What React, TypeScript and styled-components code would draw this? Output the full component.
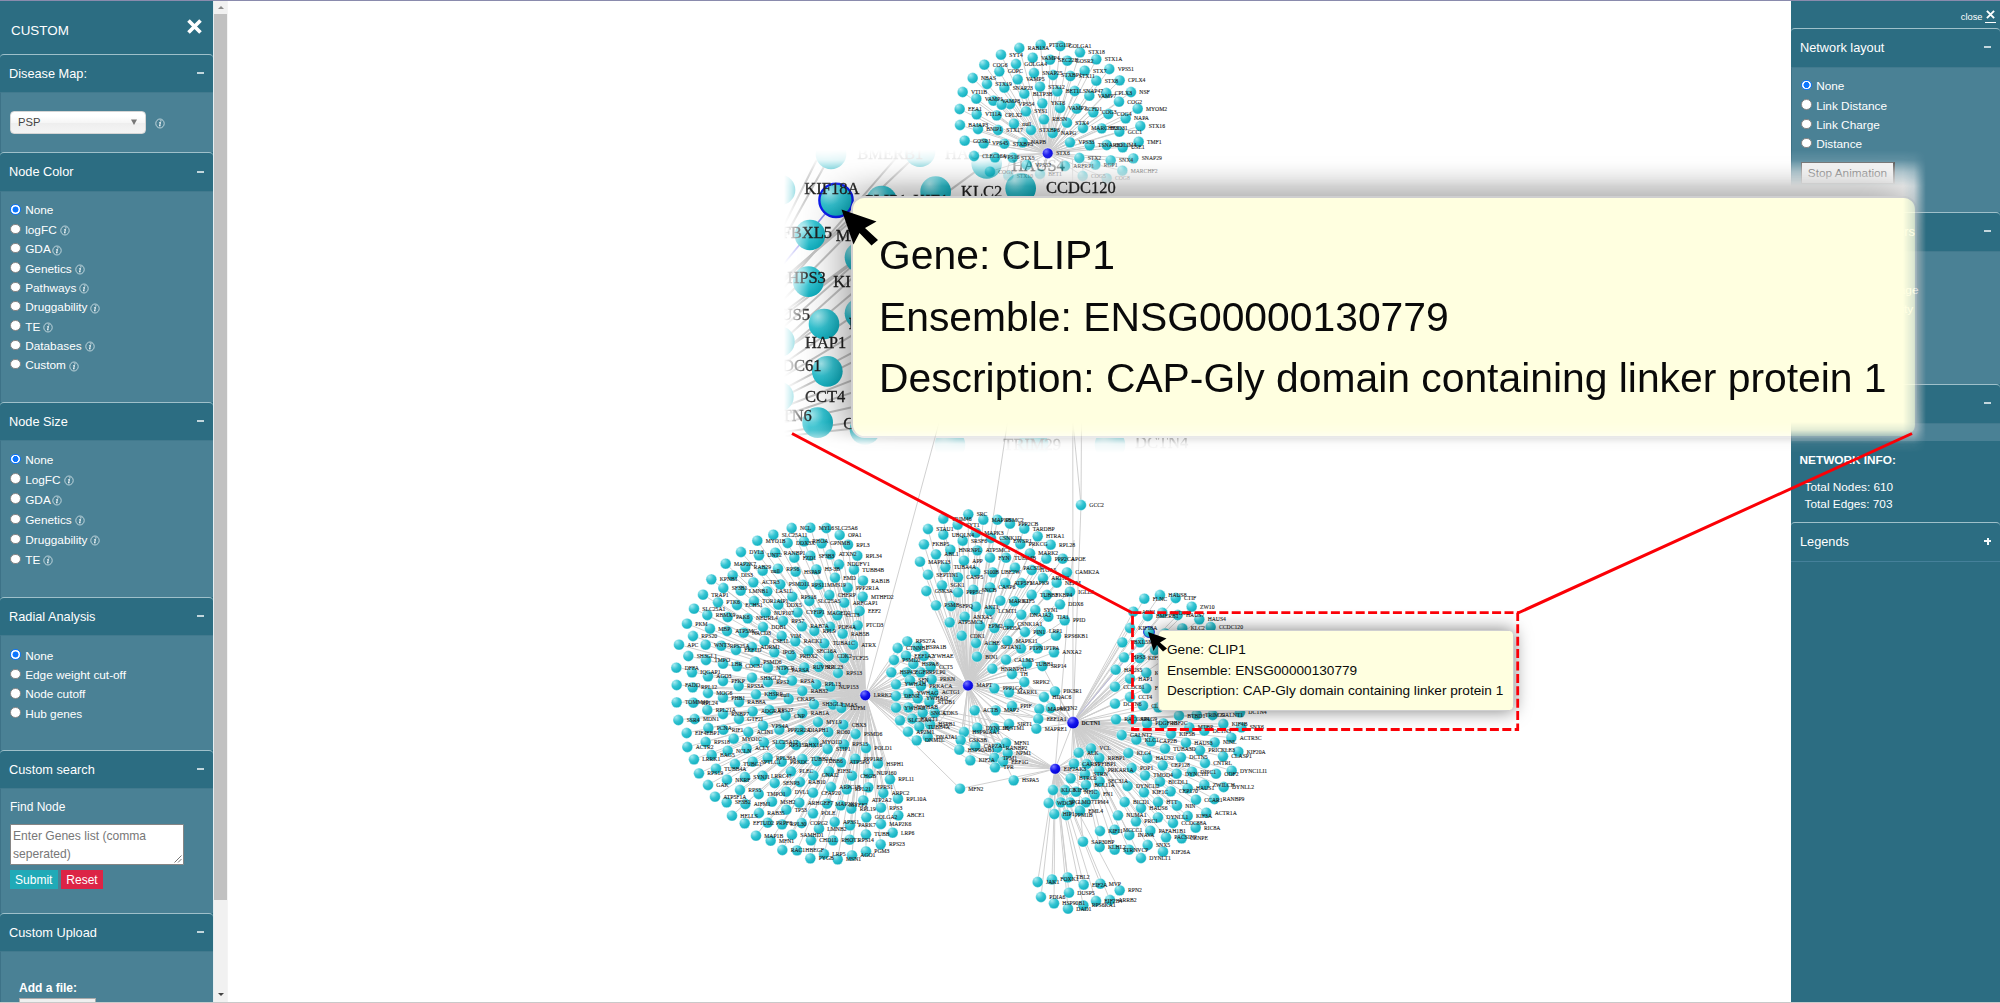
import React from "react";
import styled, { createGlobalStyle, css } from "styled-components";

const GlobalStyle = createGlobalStyle`
  html, body { margin: 0; padding: 0; background: #fff; overflow: hidden; }
  * { box-sizing: border-box; }
  body { font-family: "Liberation Sans", Arial, sans-serif; }
`;

const colors = {
  dark: "#2c6d82",
  body: "#4a8195",
  rule: "#9fc0ca",
  edge: "#3d7287",
};

/* ---------- graph data ---------- */

type GraphNode = { x: number; y: number; label: string };

// Positions are stored in thirds of a pixel, relative to the cluster origin.
const parse = (ox: number, oy: number, src: string): GraphNode[] =>
  src
    .split(";")
    .map((s) => s.trim())
    .filter(Boolean)
    .map((s) => {
      const [x, y, label = ""] = s.split(/\s+/);
      return { x: ox + Number(x) / 3, y: oy + Number(y) / 3, label };
    });

const HUBS = {
  STX6: { x: 1047.7, y: 153.3, label: "STX6" },
  LRRK2: { x: 865.3, y: 695.3, label: "LRRK2" },
  MAPT: { x: 968, y: 685.5, label: "MAPT" },
  DCTN1: { x: 1073, y: 722.7, label: "DCTN1" },
  EIF2AK3: { x: 1055.2, y: 768.8, label: "EIF2AK3" },
};

const stx6 = parse(940, 30, `238 54 RAB13A;302 44 PTTG1IP;361 48 GOLGA1;420 67 STX18;183 74 SYT4;278 83 VAMP4;330 89 SEC22B;382 92 GOSR2;
469 88 STX1A;133 104 COG6;228 102 GOLGA4;178 124 GOPC;282 129 SNAP25;339 135 STXBP1;391 138 STX11;434 122 STX7;508 117 VPS51;98 144 NBAS;
233 148 VAMP5;141 162 STX19;193 173 SNAP23;300 170 STX12;469 152 STX8;539 151 CPLX4;68 186 VTI1B;253 191 BLTP3B;352 184 BET1L;404 183 SNAP47;
448 197 VAMP7;499 189 CPLX3;573 186 NSF;109 206 VAMP1;160 212 VAMP8;210 222 VPS54;185 224;537 215 COG2;307 220 YKT6;360 234 VAMP2;59 237 EEA1;593 236 MYOM2;
110 253 VTI1A;170 256 CPLX2;258 244 SYS1;410 236 SCFD1;460 247 COG3;505 252 COG4;557 265 NAPA;312 268 RBSN;381 278 STX4;222 281 null;
60 285 BAIAP3;114 297 BNIP1;174 300 STX17;273 300 STXBP6;338 309 NAPG;429 294 MARCHF3;485 295 BUD31;538 305 GCC1;601 288 STX16;74 332 GOSR1;
131 340 VPS45;193 341 STXBP5;248 337 NAPB;390 337 VPS33;449 346 TSNARE1;500 345 GOLIM4;548 352 USE1;596 335 TMF1;102 378 CLEC16A;165 382 VPS16;
218 383 STX5;418 384 STX2;512 391 SNX4;580 385 SNAP29;375 408 ARFRP1;466 404 RGP1;547 422 MARCHF2;150 425 COG1;300 432 BET1;428 438 COG5;260 405 VPS52;205 437 STX10;500 445 COG8`);

const lrrk2 = parse(660, 500, `395 84 NCL;451 83 MYL6;499 84 SLC25A6;340 104 SLC25A11;539 105 OPA1;292 122 MYO1B;383 129 DDX3X;432 124 RHOA;485 130 GPNMB;564 134 RPL3;
243 156 DVL3;297 166 UNT2;346 158 RANBP1;403 173 FZD1;451 167 SF3B3;511 163 ATXN2;592 167 RPL34;197 191 MAP2K7;256 201 RAB29;308 212 null;354 206 RPS6;
407 215 HSPA9;469 208 H3-3B;537 193 NDUFV1;582 209 TUBB4B;154 238 KPNB1;218 226 DIS3;280 247 ACTR3;361 253 PSMD11;429 254 RPS11;476 254 MMS19;525 233 EMD;
563 263 PPP2R1A;609 242 RAB1B;129 284 TRAP1;190 264 SF3B1;242 272 LMNB1;322 274 LAS1L;397 290 RPS16;508 285 CHERP;608 290 MTHFD2;174 307 PTK6;231 315 ECHS1;
282 303 TOR1AIP1;355 314 DDX5;448 303 SLC25A5;553 308 ARFGAP1;102 326 SLC25A1;142 345 RBMX9;203 351 PAK6;263 355 NEURL4;317 338 NUP107;413 337 CYFIP1;476 338 MAGED2;
532 346 CCT3;599 333 EEF2;81 371 PKM;150 386 MBP;201 393 ATP5MG;251 398 NACD3;309 381 DDB1;369 363 RPS7;426 379 RAB7A;463 393 RPL9;510 380 PDE4A;593 376 PTCD3;
99 408 RPS20;313 423 CSE1L;365 408 VIM;548 401 RAB5B;57 434 APC;137 434 WNT3;184 437 RPS25A;228 450 EEF1D;276 441 ADRM1;406 424 RACK1;493 430 TUBA1C;579 434 ATRX;
85 468 SH3GL1;138 480 TMPO;343 457 IPO5;394 467 PRDX2;445 453 SEC16A;506 468 CDK2;552 474 TCF25;189 491 LBR;231 499 CDC37;285 485 PSMD6;324 503 NTPCR;370 510 PARSA;
433 502 RUVBL1;476 501 RPL23;49 503 DFFA;96 517 IQGAP1;144 529 AGO3;534 519 RPS13;189 543 PFKP;276 533 SH3GL2;324 546 RPS2;396 542 RPSA;469 553 RPL13;511 560 NUP153;
50 555 FADD;98 562 RPL12;236 558 RPS3A;144 579 MOG6;288 583 KHSRP;337 584 null;386 597 CKAP5;427 573 RAB32;50 607 TOMM40;100 608 RPL24;189 593 PHB1;237 606 RAB8A;
462 613 SH3GL3;519 614 CMAS;544 624 TUFM;142 630 RPL21A;189 642 RNBP7;278 634 ADGRA3;328 630 RPS27;377 647 CNP;427 640 RAB1A;55 660 SSR4;104 657 MDN1;
237 657 GTF2I;474 666 MYL9;550 674 CBX3;145 684 PCNA;190 689 RIF1;265 696 ACIN1;309 677 VPS4A;358 689 PPP2R2A;420 690 DIAPH1;505 696 RO60;587 702 PSMD6;
80 699 EIF4EBP1;221 716 MYO1C;137 726 RPS18;82 741 ACTR2;312 727 SLC25A12;361 734 RPS15A;408 735 DHX16;461 727 MYO1D;552 733 RPS15;618 744 POLD1;
155 765 BAG5;203 752 NCLN;260 745 ACLY;503 747 STIP1;102 778 LRRK1;323 773 RPL36A;365 785 PRKDC;427 777 TUBB2A;470 783 TUBB6;543 787 ATP5PO;586 776 PPP1R8;
654 791 HSPH1;117 820 RPS19;168 806 TUBB4A;225 792 TUBG1;278 785 SPTLC1;393 814 PLEC;460 826 GNAI2;507 814 EIF3L;576 827 CHGB;625 820 NUP160;690 838 RPL11;
144 855 GAK;201 839 NKRF;255 831 SYNJ1;308 827 LRRC47;344 849 SENP3;420 846 RAB10;513 861 ARPC1B;560 868 RPL21;625 862 EPRS1;670 879 ARPC2;714 896 RPL10A;
165 890 ATP5F1A;240 870 RPS5;296 882 TMPO1;379 875 DVL1;459 878 CFAP20;200 907 SF3B2;256 912 AIFM1;336 905 MSH2;418 908 ARHGEF7;501 911 MAP2K1;542 916 MYEF2;610 901 ATP2A2;
663 923 RPS3;216 947 HELLS;297 939 RAB35;379 929 TP53;459 940 POLE;574 926 RPL19;619 952 GOLGA2;715 946 ABCE1;254 970 EFTUD2;323 968 PRPF6;366 973 RPL30;
425 969 COPG2;524 966 AP3S1;570 976 PARK7;663 972 MAP2K6;288 1007 MAP1B;332 1022 MFN1;396 1004 SAMHD1;477 986 LMNB2;618 1003 TUBB;698 998 LRP6;453 1021 CHD1L;
519 1021 RHOT1;569 1019 RPS14;662 1033 RPS23;367 1050 RAC1;411 1051 HBEGF;618 1054 PGM3;451 1075 PYGB;492 1062 LRP5;533 1078 MSN1;576 1066 AGO1`);

const shared = parse(880, 490, `82 454 RPS27A;53 474 CTNNB1;112 470 HSPA1B;42 510 PSMD2;78 497 EEF1A2;132 498 YWHAE;34 547 HSP45;100 522 HSPA8;80 547 EGFR;122 547 RPLP0;152 530 CCT5;
90 571 SFN;155 568 PRKN;48 583 YWHAH;123 588 PRKACA;48 618 DENR;85 610 YWHAG;113 625 YWHAQ;160 607 ACTG1;148 635 STUB1;48 653 YWHAZ;85 652 YWHAB;128 668 SNCA;
164 668 CDK5;60 691 SLC25A4;97 686 FXCT1;118 710 TUBB4A;150 703 HSPB1;84 725 AP2M1;143 740 DNAJA1;110 751 DNM1L`);

const mapt = parse(880, 490, `265 73 SRC;190 86 TRIM46;310 89 MAPK8;352 89 PSMC2;233 104 SYT1;390 101 PPP2CB;433 116 TARDBP;144 117 STAU1;190 134 UBQLN4;288 128 MAPK3;
473 139 HTRA1;132 163 FKBP5;248 152 SRSF6;333 144 CSNK1D;375 153 EWSR1;421 162 PRKCG;512 164 RPL28;211 179 HNRNPL;292 181 ATP5MC1;168 193 ABL1;120 215 MAPK13;
252 212 APP;330 203 FYN;378 203 TUBB4B;450 190 MARK2;499 206 PPP2CA;548 206 APOE;196 232 TUBA4A;286 245 S100B;338 247 UBE2W;405 233 PACSIN;455 240 ITGA5;
561 247 CAMK2A;144 254 SEPTIN1;234 262 CASP5;489 264 ARTH2;186 286 SGK1;376 279 ATP5F1;330 292 CASP6;424 279 MAPK9;530 278 NEFM;139 303 GSK3A;234 307 PPP5C;
280 299 SNCB;570 305 IGLL5;455 314 TUBB3;501 315 FKBP4;168 346 PSMB;213 348 SFPQ;288 350 AKT1;361 332 MARK1;403 334 KIF5;540 343 DDX6;330 362 LCMT1;254 380 ANXA5;
424 374 DNAJA2;466 360 SYN1;209 397 ATP5MC3;300 408 EPM2;343 414 GPD5A;387 402 CSNK1A1;505 380 TIA1;554 391 PPID;245 437 CDK1;435 426 PIN1;482 423 LRP1;
528 437 RPS6KB1;288 459 ACHE;338 471 SPTAN1;382 452 MAPK11;423 475 PTPN1;473 475 PTPA;522 487 ANXA2;291 500 BIN1;378 509 CALM3;337 536 HNRNPH1;441 521 TUBB1;
487 528 SRP14;396 552 TH;433 576 SRPK2;343 595 PPP1CA;387 607 MARK1;525 604 PIK3R1;492 621 HDAC6;284 661 ACTB;347 661 MAP2;396 648 PPIF;478 657 MAPRE2;
512 654 ACTN2;475 687 EEF1A1;469 716 MAPRE1;387 702 SIRT1;292 713 DYNC1H;343 714 SQSTM1;252 726 HSP90AA1;242 751 GSK3B;378 759 MFN1;286 768 CAPZA1;352 773 RANBP2;
238 779 HSP90AB1;383 789 NPM1;271 811 KIF2A;343 803 TPM1;369 815 EEF1G;345 832 TPR`);

const loose = parse(880, 490, `603 45 GCC2;401 871 HSPA5;240 896 MFN2`);

const dctn1 = parse(1020, 570, `373 86 FLNC;420 75 HAUS8;467 84 CTIF;515 110 ZW10;340 125 ARF1;383 138 BMERB1;427 128 NUDCD;473 135 HAUS7;538 148 HAUS4;330 174 KIF18A;
435 190 CLIP1;487 175 KLC2;572 171 CCDC120;307 217 FBXL5;360 217 MAP4;312 262 HPS3;359 264 KIF5;287 299 HAUS5;330 326 HAP1;379 308 KIF3;405 240;285 350 CCDC61;379 355 FEZ1;
330 381 CCT4;285 401 DCTN6;369 407 CLASP;415 412;288 448 RACGAP1;336 448 SPAG9;381 460 PDGFRB;430 460 KIF2C;477 437 BTBD1;530 434 TRIM29;578 435 GALNT1;660 427 DCTN4;
610 462 KIF4B;508 472 MTBP;553 482 DCTN3;664 472 SNX6;305 495 GALNT2;349 509 KLC1;393 514 CAP2B;453 492 KIF5B;634 503 ACTR3C;498 518 HAUS3;584 517 NINL;
435 536 TUBA3D;325 549 KLC4;540 541 PRICKLE3;655 545 KIF20A;609 559 CLASP1;382 564 HAUS2;483 562 DCTN5;555 579 CNTRL;428 586 CEP128;335 594 POP1;375 616 TMOD4;
470 611 DYNC1I1;516 605 DISC1;588 611 ODF2;635 602 DYNC1LI1;323 648 DYNC1I2;420 635 BICDL1;372 667 KIF1C;452 664 CEP170;503 655 HAUS1;553 644 ZWILCH;611 651 DYNLL2;
528 689 CCAR1;583 687 RANBP9;314 696 BICD1;414 696 HTT;363 714 HAUS6;471 707 NIN;559 728 ACTR1A;294 736 NUMA1;414 742 DYNLL1;503 738 KIF3A;348 754 PRC1;
459 759 CCDC88A;527 773 RIC8A;240 783 KIF11;284 779 MCCC1;328 795 INAVA;391 782 PAFAH1B1;438 802 PACSIN2;485 805 CENPE;189 815 SAP30BP;239 831 KLHL2;284 839 STRN;327 839 VCP;
383 825 SNX5;429 845 KIF26A;363 864 DYNLT1`);

const eif = parse(1020, 570, `213 535 VCL;176 548 ALK;238 564 RRBP1;162 581 CARS1;200 582 PPFIBP1;238 601 PRKAR1A;152 625 BTRC6;195 612 STRN;239 634 SEC31A;198 645 BCL11A;
99 660 KLC8;135 660 KIF15;168 665 NFIC;224 673 FN1;86 699 WDCP;122 697 SPG;150 697 LMO7;197 697 TPM4;103 732 HIP1;139 735 PPM1B;180 722 EML4;
53 936 JAK1;96 928 FOXK1;143 922 TBL2;191 944 EIF2A;241 941 MVP;299 961 RPN2;63 981 PDIA6;147 968 DUSP5;102 1000 HSP90B1;144 1016 DAD1;190 1006 RPS6KA1;228 993 EIF2B4;270 990 ARRB2`);

type Edge = [{ x: number; y: number }, { x: number; y: number }];
const fan = (hub: { x: number; y: number }, nodes: GraphNode[]): Edge[] => nodes.map((n) => [hub, n]);

const edges: Edge[] = [
  ...fan(HUBS.STX6, stx6),
  ...fan(HUBS.LRRK2, lrrk2),
  ...fan(HUBS.LRRK2, shared),
  ...fan(HUBS.MAPT, shared),
  ...fan(HUBS.MAPT, mapt),
  ...fan(HUBS.DCTN1, dctn1),
  ...fan(HUBS.DCTN1, mapt.slice(-28, -14)),
  ...fan(HUBS.EIF2AK3, eif),
  ...fan(HUBS.EIF2AK3, mapt.slice(-13)),
  ...fan(HUBS.LRRK2, mapt.slice(-14)),
  ...fan(HUBS.DCTN1, eif.slice(0, 8)),
  [HUBS.LRRK2, { x: 1010, y: 160 }],
  [HUBS.MAPT, HUBS.STX6],
  [HUBS.DCTN1, { x: 1072.6, y: 160 }],
  [HUBS.DCTN1, loose[0]],
  [loose[0], { x: 1083, y: 160 }],
  [loose[0], { x: 1060, y: 290 }],
  [HUBS.EIF2AK3, { x: 1074, y: 540 }],
  [HUBS.EIF2AK3, HUBS.DCTN1],
  [HUBS.EIF2AK3, loose[1]],
  [HUBS.MAPT, loose[1]],
  [HUBS.EIF2AK3, loose[2]],
  [HUBS.LRRK2, loose[2]],
];

const allNodes = [...stx6, ...lrrk2, ...shared, ...mapt, ...loose, ...dctn1, ...eif];

/* ---------- styled parts ---------- */

const Page = styled.div`
  position: relative;
  display: flex;
  width: 2000px;
  height: 1003px;
  overflow: hidden;
  background: #fff;
  border-top: 1px solid #8a8bad;
  border-bottom: 1px solid #c9c9c9;
`;

const Panel = styled.aside<{ $width: number }>`
  width: ${(p) => p.$width}px;
  flex: none;
  display: flex;
  flex-direction: column;
  overflow: hidden;
  background: ${colors.dark};
  color: #fff;
`;

const LeftHeader = styled.header`
  height: 52.8px;
  flex: none;
  display: flex;
  align-items: center;
  justify-content: space-between;
  padding: 6px 11px 0 11px;
  font-size: 13.4px;
  svg { margin-top: -8px; }
`;

const CloseBar = styled.header`
  height: 27px;
  flex: none;
  display: flex;
  justify-content: flex-end;
  align-items: flex-start;
  gap: 2.5px;
  padding: 7.5px 4px 0 0;
  font-size: 9.3px;
  line-height: 16px;
`;

const CloseMark = styled.span`
  display: flex;
  justify-content: center;
  width: 11px;
  height: 14px;
  padding-top: 1px;
  border-bottom: 1.5px solid #fff;
`;

const Section = styled.section<{ $height?: number }>`
  flex: none;
  height: ${(p) => (p.$height ? `${p.$height}px` : "auto")};
  display: flex;
  flex-direction: column;
`;

const SectionHead = styled.h3`
  display: flex;
  align-items: center;
  justify-content: space-between;
  flex: none;
  height: 38.5px;
  margin: 0;
  padding: 0 9px 0.8px 9px;
  border-top: 1.4px solid ${colors.rule};
  border-radius: 4px 4px 0 0;
  background: ${colors.dark};
  font-size: 12.75px;
  font-weight: 400;
`;

const Sign = styled.i<{ $plus?: boolean }>`
  display: grid;
  place-items: center;
  width: 7px;
  height: 7px;
  &::before {
    content: "";
    grid-area: 1 / 1;
    width: 7px;
    height: 2px;
    background: ${(p) => (p.$plus ? "#f6fafb" : "#c3d7dd")};
  }
  ${(p) =>
    p.$plus &&
    css`
      &::after {
        content: "";
        grid-area: 1 / 1;
        width: 2px;
        height: 7px;
        background: #f6fafb;
      }
    `}
`;

const SectionBody = styled.div<{ $pad: string }>`
  flex: 1;
  min-height: 0;
  padding: ${(p) => p.$pad};
  background: ${colors.body};
  border-left: 1px solid ${colors.edge};
  border-top: 1px solid #427a8e;
`;

const RadioRow = styled.label<{ $h: number }>`
  display: flex;
  align-items: center;
  height: ${(p) => p.$h}px;
  font-size: 11.8px;
  white-space: nowrap;
`;

const Dot = styled.span<{ $on?: boolean }>`
  width: 10.5px;
  height: 10.5px;
  margin: -2px 4.7px 0 0;
  border-radius: 50%;
  flex: none;
  background: ${(p) => (p.$on ? "radial-gradient(circle, #0d76ff 0 2.7px, #fff 3.3px)" : "#fff")};
  border: 1px solid ${(p) => (p.$on ? "#0d76ff" : "#858585")};
`;

const InfoSvg = styled.svg<{ $gap: number }>`
  margin: 2px 0 0 ${(p) => p.$gap}px;
`;

const SelectRow = styled.div`
  display: flex;
  align-items: center;
`;

const SelectBox = styled.div`
  display: flex;
  align-items: center;
  justify-content: space-between;
  width: 136px;
  height: 23px;
  padding: 0 8px 1px 7px;
  border: 1px solid #d5d5d5;
  border-radius: 4px;
  background: linear-gradient(#fff 20%, #f6f6f6 50%, #eee 52%, #f4f4f4);
  color: #444;
  font-size: 11.2px;
`;

const Field = styled.div`
  font-size: 12px;
  line-height: 15px;
`;

const TextArea = styled.div`
  display: flex;
  align-items: flex-end;
  justify-content: space-between;
  width: 174px;
  height: 41px;
  margin-top: 9.5px;
  padding: 2px 1px 1px 2px;
  border: 1px solid #858585;
  border-radius: 1px;
  background: #fff;
  color: #777;
  font-size: 12.1px;
  line-height: 18px;
  span { align-self: flex-start; width: 150px; }
  svg { flex: none; }
`;

const ButtonRow = styled.div`
  display: flex;
  gap: 3.5px;
  margin-top: 5px;
`;

const Button = styled.button<{ $bg: string; $w: number }>`
  width: ${(p) => p.$w}px;
  height: 19px;
  padding: 0;
  border: 0;
  background: ${(p) => p.$bg};
  color: #fff;
  font: 12px "Liberation Sans", Arial, sans-serif;
`;

const StopButton = styled.button`
  display: block;
  width: 94px;
  height: 22px;
  margin-top: 8.5px;
  padding: 0;
  border: 1px solid #555;
  border-right: 2px solid #333;
  background: #efefef;
  color: #111;
  font: 11.8px "Liberation Sans", Arial, sans-serif;
`;

const FileLabel = styled.div`
  font-size: 12px;
  font-weight: 700;
  line-height: 14px;
`;

const FileButton = styled.div`
  width: 77px;
  height: 20px;
  margin-top: 3px;
  border: 1px solid #aaa;
  background: #efefef;
`;

const NetworkInfo = styled.div`
  flex: none;
  height: 81px;
  padding: 11px 8.6px 0;
  font-size: 11.8px;
  line-height: 17.6px;
  strong { display: block; margin-bottom: 9px; }
  p { margin: 0 0 0 5px; }
`;

const PanelFoot = styled.div`
  flex: 1;
  border-top: 1px solid #45809a;
`;

const ScrollTrack = styled.div`
  display: flex;
  flex-direction: column;
  align-items: center;
  flex: none;
  width: 15px;
  background: #f1f1f1;
  border-left: 1px solid #e4eef1;
  border-right: 1px solid #f4f4f4;
`;

const ScrollThumb = styled.div`
  width: 13px;
  height: 886px;
  background: #c1c1c1;
`;

const ScrollArrow = styled.div<{ $up?: boolean }>`
  width: 0;
  height: 0;
  border: 3.5px solid transparent;
  ${(p) =>
    p.$up
      ? css`
          margin: 2px 0 5px;
          border-bottom-color: #8a8a8a;
        `
      : css`
          margin-top: auto;
          margin-bottom: 3px;
          border-top-color: #444;
        `}
`;

const Canvas = styled.main`
  flex: 1;
  min-width: 0;
  overflow: hidden;
`;

const Label = styled.text<{ $size: number; $bold?: boolean }>`
  font-family: "Liberation Serif", "Times New Roman", serif;
  font-size: ${(p) => p.$size}px;
  font-weight: ${(p) => (p.$bold ? 700 : 400)};
  fill: #222;
  stroke: #222;
  stroke-width: ${(p) => p.$size * 0.018}px;
`;

const Tooltip = styled.div<{ $k: number }>`
  position: absolute;
  display: flex;
  flex-direction: column;
  box-sizing: border-box;
  background: #ffffe0;
  color: #0a0a0a;
  white-space: nowrap;
  border: ${(p) => 0.8 * p.$k}px solid #cfcfd0;
  border-radius: ${(p) => 4.5 * p.$k}px;
  padding: ${(p) => 9 * p.$k}px 0 0 ${(p) => 9 * p.$k - (p.$k > 1 ? 1 : 0)}px;
  font-size: ${(p) => (p.$k > 1 ? 40.85 : 13.64)}px;
  line-height: ${(p) => 20.5 * p.$k}px;
  box-shadow: 0 0 ${(p) => 17 * p.$k}px rgba(0, 0, 0, 0.5);
`;

const SmallTooltip = styled(Tooltip)`
  left: 1157.5px;
  top: 629.3px;
  width: 356px;
  height: 81px;
  padding-left: 8.5px;
`;

const Inset = styled.div`
  position: absolute;
  left: 780px;
  top: 149px;
  width: 1146px;
  height: 303px;
  overflow: hidden;
  background: #fff;
  mask-image: linear-gradient(to right, transparent 4px, rgba(0,0,0,.25) 12px, #000 29px, #000 1123px, rgba(0,0,0,.8) 1134px, rgba(0,0,0,.3) 1141px, transparent 100%),
    linear-gradient(to bottom, transparent 0, rgba(0,0,0,.12) 10px, rgba(0,0,0,.6) 22px, #000 36px, #000 272px, rgba(0,0,0,.85) 280px, rgba(0,0,0,.4) 288px, rgba(0,0,0,.08) 294px, transparent 100%);
  mask-composite: intersect;
`;

const BigTooltip = styled(Tooltip)`
  left: 71px;
  top: 46.4px;
  width: 1066px;
  height: 242px;
`;

const FullSvg = styled.svg`
  position: absolute;
  left: 0;
  top: -1px;
`;

const InsetSvg = styled.svg`
  position: absolute;
  left: 0;
  top: 0;
`;

/* ---------- small pieces ---------- */

const Info = ({ gap = 4 }: { gap?: number }) => (
  <InfoSvg $gap={gap} width="10" height="11" viewBox="0 0 10 11" fill="none" stroke="#dbe8ec">
    <ellipse cx="5" cy="5.5" rx="4.2" ry="4.5" strokeWidth="0.8" />
    <path d="M4.1 4.9 L5.5 4.5 L4.5 8 Q4.6 8.4 5.6 7.7" strokeWidth="1" stroke="#fff" />
    <circle cx="5.9" cy="2.9" r="0.4" strokeWidth="0.6" stroke="#fff" />
  </InfoSvg>
);

const Cross = ({ size, weight }: { size: number; weight: number }) => (
  <svg width={size} height={size} viewBox="0 0 14 14" stroke="#fff" strokeWidth={weight}>
    <path d="M1.4 1.4 L12.6 12.6 M12.6 1.4 L1.4 12.6" />
  </svg>
);

type Option = { text: string; info?: boolean };

const Radios = ({ items, rowHeight }: { items: Option[]; rowHeight: number }) => (
  <>
    {items.map((o, i) => (
      <RadioRow key={o.text} $h={i === 0 ? 19.35 : rowHeight}>
        <Dot $on={o.text === "None"} />
        {o.text}
        {o.info && <Info gap={o.text === "GDA" ? 1.5 : 3} />}
      </RadioRow>
    ))}
  </>
);

const Head = ({ title, plus }: { title: string; plus?: boolean }) => (
  <SectionHead>
    <span>{title}</span>
    <Sign $plus={plus} />
  </SectionHead>
);

const withInfo = (names: string[]): Option[] => [{ text: "None" }, ...names.map((text) => ({ text, info: true }))];
const plain = (names: string[]): Option[] => names.map((text) => ({ text }));

const LeftPanel = () => (
  <Panel $width={213}>
    <LeftHeader>
      CUSTOM
      <Cross size={15} weight={3.4} />
    </LeftHeader>
    <Section $height={98.5}>
      <Head title="Disease Map:" />
      <SectionBody $pad="18px 9px">
        <SelectRow>
          <SelectBox>
            PSP
            <svg width="6" height="6" viewBox="0 0 6 6"><path d="M0 .5 H6 L3 6 Z" fill="#777" /></svg>
          </SelectBox>
          <Info gap={9} />
        </SelectRow>
      </SectionBody>
    </Section>
    <Section $height={249.5}>
      <Head title="Node Color" />
      <SectionBody $pad="9px 9px">
        <Radios items={withInfo(["logFC", "GDA", "Genetics", "Pathways", "Druggability", "TE", "Databases", "Custom"])} rowHeight={19.35} />
      </SectionBody>
    </Section>
    <Section $height={195.2}>
      <Head title="Node Size" />
      <SectionBody $pad="9px 9px">
        <Radios items={withInfo(["LogFC", "GDA", "Genetics", "Druggability", "TE"])} rowHeight={20.05} />
      </SectionBody>
    </Section>
    <Section $height={153}>
      <Head title="Radial Analysis" />
      <SectionBody $pad="9.5px 9px">
        <Radios items={plain(["None", "Edge weight cut-off", "Node cutoff", "Hub genes"])} rowHeight={19.35} />
      </SectionBody>
    </Section>
    <Section $height={162.8}>
      <Head title="Custom search" />
      <SectionBody $pad="10.5px 9px">
        <Field>Find Node</Field>
        <TextArea>
          <span>Enter Genes list (comma seperated)</span>
          <svg width="8" height="8" viewBox="0 0 8 8" stroke="#666" strokeWidth="0.9"><path d="M0.5 7.5 L7.5 0.5 M4 7.5 L7.5 4" /></svg>
        </TextArea>
        <ButtonRow>
          <Button $bg="#20aab7" $w={47.5}>Submit</Button>
          <Button $bg="#dc2446" $w={42}>Reset</Button>
        </ButtonRow>
      </SectionBody>
    </Section>
    <Section $height={100}>
      <Head title="Custom Upload" />
      <SectionBody $pad="29px 18px">
        <FileLabel>Add a file:</FileLabel>
        <FileButton />
      </SectionBody>
    </Section>
  </Panel>
);

const RightPanel = () => (
  <Panel $width={209}>
    <CloseBar>
      close
      <CloseMark><Cross size={9} weight={3} /></CloseMark>
    </CloseBar>
    <Section $height={184}>
      <Head title="Network layout" />
      <SectionBody $pad="9px 9px">
        <Radios items={plain(["None", "Link Distance", "Link Charge", "Distance"])} rowHeight={19.35} />
        <StopButton>Stop Animation</StopButton>
      </SectionBody>
    </Section>
    <Section $height={172}>
      <Head title="Network parameters" />
      <SectionBody $pad="9px 9px">
        <Radios items={plain(["None", "Highlight by linkage", "Node label opacity"])} rowHeight={19.35} />
      </SectionBody>
    </Section>
    <Section $height={57}>
      <Head title="" />
      <SectionBody $pad="0" />
    </Section>
    <NetworkInfo>
      <strong>NETWORK INFO:</strong>
      <p>Total Nodes: 610</p>
      <p>Total Edges: 703</p>
    </NetworkInfo>
    <Section>
      <Head title="Legends" plus />
    </Section>
    <PanelFoot />
  </Panel>
);

const NodeGradients = () => (
  <defs>
    <radialGradient id="teal" cx="0.3" cy="0.25" r="0.8">
      <stop offset="0" stopColor="#a6eaf0" />
      <stop offset="0.5" stopColor="#35c5d3" />
      <stop offset="1" stopColor="#0eaebe" />
    </radialGradient>
    <radialGradient id="blue" cx="0.35" cy="0.3" r="0.75">
      <stop offset="0" stopColor="#7777ff" />
      <stop offset="0.5" stopColor="#1414ee" />
      <stop offset="1" stopColor="#0000cf" />
    </radialGradient>
  </defs>
);

const Network = () => (
  <svg width="1563" height="1001" viewBox="228 1 1563 1001">
    <NodeGradients />
    <g stroke="#cdcdcd" strokeWidth="0.95">
      {edges.map(([a, b], i) => (
        <line key={i} x1={a.x} y1={a.y} x2={b.x} y2={b.y} />
      ))}
    </g>
    <path d="M1073 722 L1149 632" stroke="#b9b6e2" strokeWidth="0.8" />
    <g fill="url(#teal)" stroke="#fff" strokeWidth="0.4">
      {allNodes.map((n, i) => (
        <circle key={i} cx={n.x} cy={n.y} r="5.4" />
      ))}
    </g>
    <circle cx="1149" cy="632" r="5.4" fill="url(#teal)" stroke="#1c30e0" strokeWidth="1" />
    {Object.values(HUBS).map((h) => (
      <circle key={h.label} cx={h.x} cy={h.y} r={h.label === "DCTN1" ? 6.1 : 5.4} fill="url(#blue)" stroke="#fff" strokeWidth="0.5" />
    ))}
    {allNodes
      .filter((n) => n.label)
      .map((n, i) => (
        <Label key={i} $size={5.7} x={n.x + 8.3} y={n.y + 1.9}>{n.label}</Label>
      ))}
    {Object.values(HUBS).map((h) => (
      <Label key={h.label} $size={5.7} $bold={h.label === "DCTN1"} x={h.x + 8.5} y={h.y + 1.9}>{h.label}</Label>
    ))}
  </svg>
);

const insetNodes: [number, number][] = [
  [183, 42], [450, 35], [650, 70], [752, 145], [497, 155], [335, 183], [120, 285], [30, 150], [270, 352], [115, 425],
  [162, 552], [28, 605], [172, 694], [25, 770], [143, 848], [285, 868], [270, 520], [540, 915], [790, 915], [1020, 915],
];

const insetLabels: [number, number, string][] = [
  [262, 40, "BMERB1"], [525, 40, "HAUS7"], [725, 77, "HAUS4"], [103, 147, "KIF18A"], [278, 182, "CLIP1"], [430, 182, "KIF1"],
  [573, 155, "KLC2"], [828, 142, "CCDC120"], [35, 279, "FBXL5"], [197, 287, "MAP4"], [52, 413, "HPS3"], [190, 424, "KIF5"],
  [-4, 525, "AUS5"], [105, 607, "HAP1"], [-30, 677, "CCDC61"], [105, 770, "CCT4"], [-34, 828, "DCTN6"], [220, 850, "CLASP"],
  [236, 552, "K"], [700, 915, "TRIM29"], [1095, 907, "DCTN4"],
];

const insetRays: [number, number, number, number][] = [
  [-60, 480, 183, 42], [-40, 500, 450, 35], [-60, 560, 390, 40], [-50, 570, 335, 180], [-60, 460, 140, 60], [-80, 620, 270, 352],
  [-60, 590, 650, 70], [-60, 650, 497, 155], [-60, 690, 330, 340], [-60, 720, 270, 440], [-60, 740, 290, 500], [-60, 770, 290, 560],
  [-60, 800, 300, 610], [-60, 820, 300, 640], [-60, 840, 300, 700], [-60, 860, 300, 740], [-60, 870, 300, 790], [-60, 890, 300, 840],
  [-60, 500, 260, 230], [-60, 700, 160, 552], [-60, 900, 300, 860],
];

const Magnified = () => (
  <Inset>
    <InsetSvg width="1146" height="303" viewBox="30 30 3438 909">
      <g stroke="#c4c4c4" strokeWidth="6">
        {insetRays.map(([x1, y1, x2, y2], i) => (
          <line key={i} x1={x1} y1={y1} x2={x2} y2={y2} />
        ))}
      </g>
      <path d="M30 385 L198 182" stroke="#8f8cf0" strokeWidth="5" />
      {insetNodes.map(([x, y], i) => (
        <circle key={i} cx={x} cy={y} r="46" fill="url(#teal)" />
      ))}
      <circle cx="198" cy="181" r="50" fill="url(#teal)" stroke="#0d1df0" strokeWidth="7" />
      {insetLabels.map(([x, y, t]) => (
        <Label key={t} $size={49.5} x={x} y={y + 16}>{t}</Label>
      ))}
    </InsetSvg>
    <BigTooltip $k={3}>
      <span>Gene: CLIP1</span>
      <span>Ensemble: ENSG00000130779</span>
      <span>Description: CAP-Gly domain containing linker protein 1</span>
    </BigTooltip>
  </Inset>
);

const Callout = () => (
  <FullSvg width="2000" height="1003" viewBox="0 0 2000 1003" fill="none" stroke="#fb0006" strokeWidth="3">
    <path d="M792 433.5 L1132.5 613 M1912 433.5 L1518 613" />
    <rect x="1132.5" y="612.7" width="385.2" height="116.8" strokeDasharray="9 3.4" strokeWidth="2.8" />
    <path d="M841.5 209.5 L876.5 221.5 L865 228 L878 240 L871.5 245.5 L859.5 233 L853.5 244.5 Z" fill="#000" stroke="none" />
    <path d="M1148 632 L1166.5 638.5 L1160 642.5 L1167 648.5 L1163 651.5 L1157 645 L1153.5 651 Z" fill="#000" stroke="none" />
  </FullSvg>
);

const App = () => (
  <>
    <GlobalStyle />
    <Page>
      <LeftPanel />
      <ScrollTrack>
        <ScrollArrow $up />
        <ScrollThumb />
        <ScrollArrow />
      </ScrollTrack>
      <Canvas>
        <Network />
      </Canvas>
      <RightPanel />
      <SmallTooltip $k={1}>
        <span>Gene: CLIP1</span>
        <span>Ensemble: ENSG00000130779</span>
        <span>Description: CAP-Gly domain containing linker protein 1</span>
      </SmallTooltip>
      <Magnified />
      <Callout />
    </Page>
  </>
);

export default App;
